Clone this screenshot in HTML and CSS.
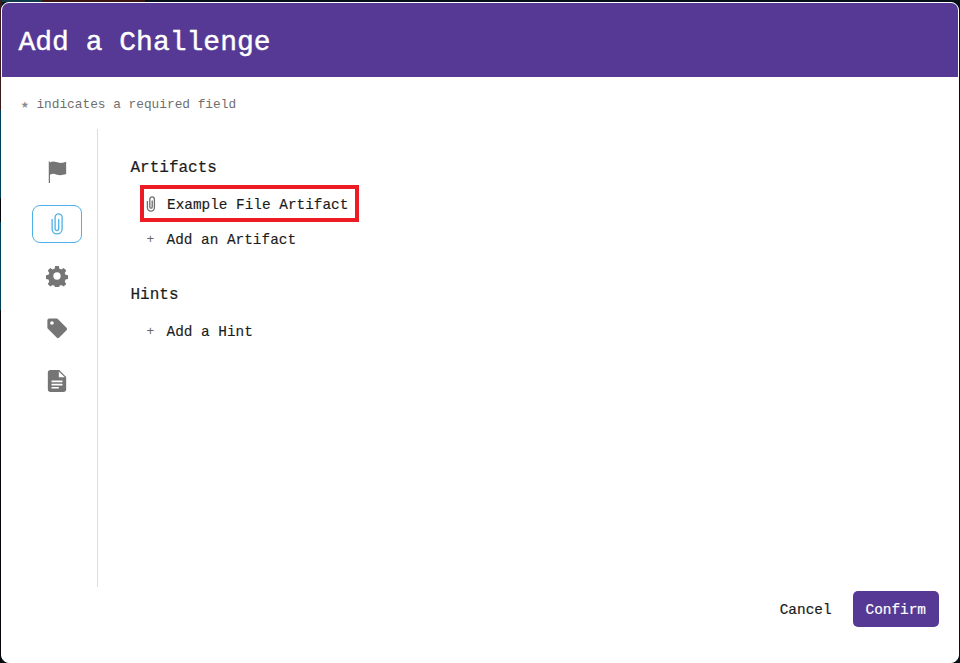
FILE: index.html
```html
<!DOCTYPE html>
<html lang="en">
<head>
<meta charset="utf-8">
<title>Add a Challenge</title>
<link rel="stylesheet" href="styles.css">
</head>
<body>
<div class="modal">
  <header class="modal-header"><h1 class="modal-title">Add a Challenge</h1></header>
  <p class="required-note"><span class="star">★</span> indicates a required field</p>
  <div class="modal-body">
    <nav class="tabs">
      <button class="tab"><svg class="tab-icon" viewBox="0 0 24 24"><path d="M3 .5h1.400v1c2.200-1.300 4.600-1.200 6.800-.3 3 1.200 6 1.300 10.800-.4v13.500c-4.800 1.600-7.800 1.500-10.800.3-2.200-.9-4.600-1-6.800.3V24H3z"/></svg></button>
      <button class="tab tab-active"><svg class="clip-icon" viewBox="0 0 12 22" fill="none" stroke="#4db1e8" stroke-width="1.300"><path d="M7.700 6v9.500c0 2.800-3.600 2.800-3.600 0V3.800c0-3.800 7-3.800 7 0V16c0 6.500-10 6.500-10 0V6"/></svg></button>
      <button class="tab"><svg class="tab-icon" viewBox="0 0 24 24"><path fill-rule="evenodd" d="M10 1h4l.6 3c.8.2 1.500.5 2.100.9l2.600-1.700 2.800 2.800-1.700 2.600c.4.7.7 1.400.9 2.100l3 .6v4l-3 .6c-.2.8-.5 1.500-.9 2.100l1.700 2.600-2.800 2.800-2.600-1.700c-.6.4-1.300.7-2.100.9l-.6 3h-4l-.6-3c-.8-.2-1.500-.5-2.100-.9l-2.600 1.700-2.800-2.800 1.700-2.600c-.4-.6-.7-1.300-.9-2.100l-3-.6v-4l3-.6c.2-.7.5-1.400.9-2.100L1.900 6l2.800-2.800 2.600 1.700c.6-.4 1.300-.7 2.100-.9zM12 8a4 4 0 1 0 0 8 4 4 0 0 0 0-8z"/></svg></button>
      <button class="tab"><svg class="tab-icon" viewBox="0 0 24 24"><path fill-rule="evenodd" d="M1.500 3.500a2 2 0 0 1 2-2h8a2 2 0 0 1 1.400.6l9.500 9.500a2 2 0 0 1 0 2.800l-8 8a2 2 0 0 1-2.800 0L2.100 12.900a2 2 0 0 1-.6-1.400zM6.500 4.500a2 2 0 1 0 0 4 2 2 0 0 0 0-4z"/></svg></button>
      <button class="tab tab-doc"><svg class="tab-icon" viewBox="0 0 24 24"><path fill-rule="evenodd" d="M5 0h9.500L22 7.500V21a3 3 0 0 1-3 3H5a3 3 0 0 1-3-3V3a3 3 0 0 1 3-3zM14 1.500V8h6.500zM6 11.500v1.800h12v-1.800zM6 15v1.800h12V15zM6 18.500v1.800h8v-1.800z"/></svg></button>
    </nav>
    <main class="content">
      <section class="group">
        <h2 class="group-title">Artifacts</h2>
        <ul class="items">
          <li class="item item-marked">
            <svg class="item-icon" viewBox="0 0 10 16" fill="none" stroke="#6e6e6e" stroke-width="1.300"><path d="M6.200 4.500V11c0 1.600-2.400 1.600-2.400 0V3.200c0-3 4.600-3 4.600 0v8.300c0 4.700-7 4.700-7 0V5"/></svg>
            <span>Example File Artifact</span>
          </li>
          <li class="item"><span class="plus">+</span><span>Add an Artifact</span></li>
        </ul>
      </section>
      <section class="group">
        <h2 class="group-title">Hints</h2>
        <ul class="items">
          <li class="item"><span class="plus">+</span><span>Add a Hint</span></li>
        </ul>
      </section>
    </main>
  </div>
  <footer class="modal-footer">
    <button class="btn btn-cancel">Cancel</button>
    <button class="btn btn-confirm">Confirm</button>
  </footer>
</div>
</body>
</html>
```
FILE: styles.css
```css
* { box-sizing: border-box; }
html, body { margin: 0; height: 100%; overflow: hidden; }
body {
  background-color: #061019;
  background-image:
    linear-gradient(to bottom, #3a1a1a 0, #3a1a1a 110px, #003f58 110px, #003f58 198px, #05070c 198px, #05070c 222px, #003f58 222px, #003f58 310px, #05070c 310px),
    linear-gradient(to right, #0f3a48 0, #0f3a48 42px, #3a1410 42px, #3a1410 145px, #061019 145px);
  background-size: 2px 100%, 100% 2px;
  background-repeat: no-repeat;
  font-family: "Liberation Mono", "DejaVu Sans Mono", monospace;
  color: #1c1c1c;
}
.modal {
  margin: 2px 1px 0 1px;
  height: 661px;
  background: #fff;
  border: 1px solid #fff;
  border-radius: 8px;
  overflow: hidden;
  display: flex;
  flex-direction: column;
}
.modal-header {
  background: #553994;
  height: 74px;
  padding: 4px 16.5px 0;
  display: flex;
  align-items: center;
  flex: none;
}
.modal-title {
  margin: 0;
  font-size: 28px;
  font-weight: 400;
  color: #fff;
  -webkit-text-stroke: 0.4px #fff;
}
.required-note {
  margin: 19px 0 0 19px;
  font-size: 12.8px;
  line-height: 18px;
  color: #6e6e6e;
}
.star { color: #8a8a8a; }
.modal-body {
  display: flex;
  margin: 15px 0 0 0;
  height: 458px;
  flex: none;
}
.tabs {
  width: 96px;
  padding: 24px 14px 0 30px;
  border-right: 1px solid #dcdcdc;
  display: flex;
  flex-direction: column;
  gap: 14px;
  flex: none;
}
.tab {
  width: 50px;
  height: 38px;
  padding: 0;
  background: none;
  border: 1px solid transparent;
  border-radius: 8px;
  display: flex;
  align-items: center;
  justify-content: center;
  flex: none;
}
.tab-active { border-color: #4db1e8; }
.tab-doc { padding-top: 2px; }
.tab-icon { width: 22px; height: 22px; fill: #757575; }
.clip-icon { width: 12px; height: 22px; }
.content { padding: 29px 0 0 32px; flex: 1; }
.group { margin-bottom: 27px; }
.group-title {
  margin: 0;
  padding: 1px 0 0 0.5px;
  font-size: 16px;
  line-height: 19px;
  height: 20px;
  font-weight: 400;
  -webkit-text-stroke: 0.2px #1c1c1c;
}
.items { list-style: none; margin: 8px 0 0 0; padding: 0 0 0 10px; }
.group:first-child .items { margin-top: 7px; }
.item {
  display: flex;
  align-items: center;
  width: 219px;
  height: 37px;
  padding-left: 5.5px;
  font-size: 14.4px;
  gap: 11px;
  -webkit-text-stroke: 0.15px #1c1c1c;
}
.item-marked {
  border: 4px solid #ed1c24;
  margin-bottom: -1px;
  padding: 2px 0 0 2px;
  gap: 11px;
}
.item-icon { width: 10px; height: 16px; flex: none; margin-top: -2px; }
.plus { width: 10px; text-align: center; color: #666; font-size: 13px; -webkit-text-stroke: 0; }
.modal-footer {
  display: flex;
  justify-content: flex-end;
  align-items: center;
  padding: 4px 19px 0 0;
  gap: 11px;
}
.btn {
  font-family: inherit;
  font-size: 14.4px;
  border: none;
  height: 36px;
  border-radius: 5px;
  padding: 1px 10px 0;
  -webkit-text-stroke: 0.2px currentColor;
}
.btn-cancel { background: none; color: #1c1c1c; }
.btn-confirm { background: #553994; color: #fff; padding: 1px 13px 0; }
```
